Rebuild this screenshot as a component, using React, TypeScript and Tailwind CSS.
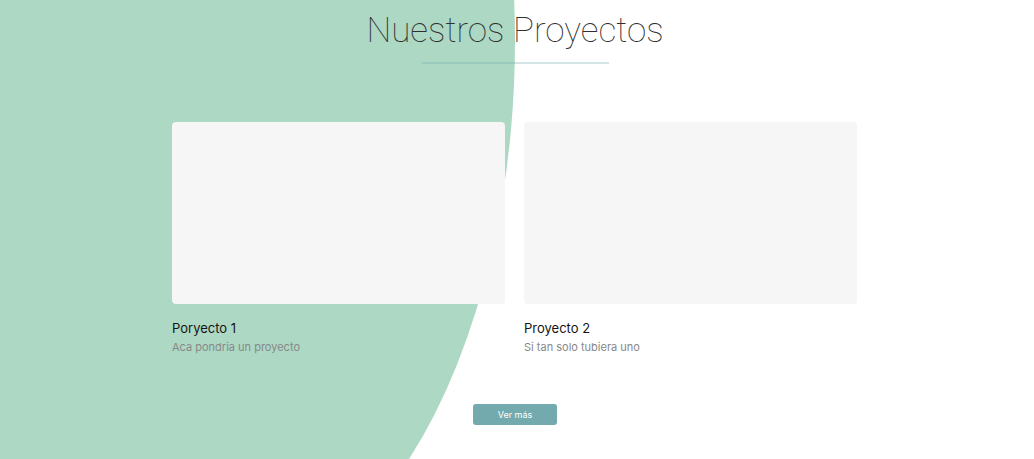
import React from "react";

export default function App() {
  return (
    <div className="relative w-[1034px] h-[459px] overflow-hidden bg-white" style={{ fontFamily: "Inter, 'Noto Sans', sans-serif" }}>
      <svg className="absolute left-0 top-0" width="1034" height="459" viewBox="0 0 1034 459">
        <path d="M0 0 H514.2 A301 550 0 0 1 409 459 H0 Z" fill="#acd8c4" />
      </svg>
      <div className="relative flex flex-col items-center pr-[4px]">
        <h1 className="mt-[11px] text-[35px] leading-[40px] font-thin text-[#2f2f2f]" style={{ fontFamily: "Roboto, sans-serif" }}>
          Nuestros Proyectos
        </h1>
        <div className="mt-[11px] w-[187px] h-[2px] bg-[#72a9ad]/30" />
        <div className="mt-[58px] mr-[1px] flex gap-[19px]">
          <div className="w-[333px]">
            <div className="h-[182px] rounded-[4px] bg-[#f6f6f6]" />
            <div className="mt-[15px] text-[13px] leading-[18px] text-[#151515]">Poryecto 1</div>
            <div className="mt-[3px] text-[11px] leading-[14px] text-[#888888]">Aca pondria un proyecto</div>
          </div>
          <div className="w-[333px]">
            <div className="h-[182px] rounded-[4px] bg-[#f6f6f6]" />
            <div className="mt-[15px] text-[13px] leading-[18px] text-[#151515]">Proyecto 2</div>
            <div className="mt-[3px] text-[11px] leading-[14px] text-[#888888]">Si tan solo tubiera uno</div>
          </div>
        </div>
        <button className="mt-[50px] w-[84px] h-[21px] rounded-[3px] bg-[#72aaad] text-white text-[9px] leading-[21px]">
          Ver más
        </button>
      </div>
    </div>
  );
}
